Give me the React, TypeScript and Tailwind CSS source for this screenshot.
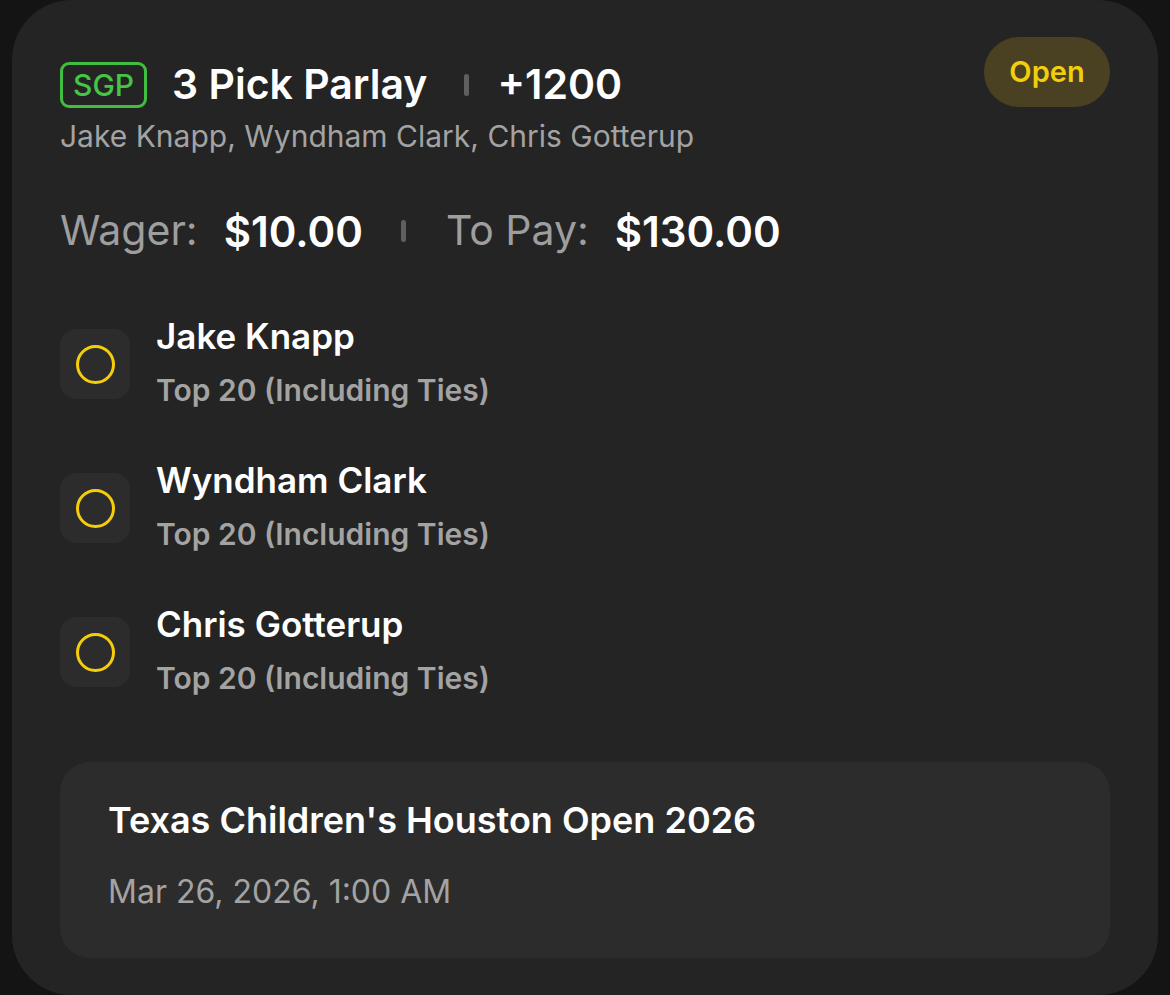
const legs = [
  { name: "Jake Knapp", market: "Top 20 (Including Ties)" },
  { name: "Wyndham Clark", market: "Top 20 (Including Ties)" },
  { name: "Chris Gotterup", market: "Top 20 (Including Ties)" },
];

function Divider() {
  return <span className="w-[5px] h-[22px] rounded-full bg-[#5f5f5f]" />;
}

export default function App() {
  return (
    <div
      className="w-[1170px] h-[995px] bg-[#141414] px-3 overflow-hidden"
      style={{ fontFamily: "Inter, 'Noto Sans', sans-serif" }}
    >
      <div className="h-[995px] bg-[#242424] rounded-[60px] px-12 pt-[37px]">
        <div className="flex justify-between items-start">
          <div className="pt-[25px]">
            <div className="flex items-center h-[46px]">
              <span className="h-[46px] px-[10px] flex items-center border-[3px] border-[#3fbe3f] rounded-[9px] text-[#45c445] text-[30px] font-medium">
                SGP
              </span>
              <span className="ml-[25px] text-white text-[41px] font-semibold">
                3 Pick Parlay
              </span>
              <span className="ml-[37px] mr-[28px] flex">
                <Divider />
              </span>
              <span className="text-white text-[41px] font-semibold">+1200</span>
            </div>
            <div className="mt-[8px] text-[#a3a3a3] text-[30px] leading-[40px]">
              Jake Knapp, Wyndham Clark, Chris Gotterup
            </div>
          </div>
          <span className="h-[70px] w-[126px] rounded-full bg-[#4a4122] text-[#f2cf0a] text-[29px] font-semibold flex items-center justify-center">
            Open
          </span>
        </div>

        <div className="mt-[50px] flex items-center h-[50px] text-[41px]">
          <span className="text-[#9e9e9e]">Wager:</span>
          <span className="ml-[26px] text-white font-semibold text-[42px]">$10.00</span>
          <span className="ml-[38px] mr-[40px] flex">
            <Divider />
          </span>
          <span className="text-[#9e9e9e]">To Pay:</span>
          <span className="ml-[26px] text-white font-semibold text-[42px]">$130.00</span>
        </div>

        <div className="mt-[73px] flex flex-col gap-[74px]">
          {legs.map((leg) => (
            <div key={leg.name} className="flex items-center h-[70px]">
              <div className="w-[70px] h-[70px] rounded-[16px] bg-[#2c2c2c] flex items-center justify-center">
                <span className="w-[39px] h-[39px] rounded-full border-[3px] border-[#f2cf0a]" />
              </div>
              <div className="ml-[26px] flex flex-col">
                <span className="text-white text-[35px] font-semibold leading-[52px] -mt-[2px]">
                  {leg.name}
                </span>
                <span className="text-[#a3a3a3] text-[30px] font-semibold leading-[52px] mt-[2px]">
                  {leg.market}
                </span>
              </div>
            </div>
          ))}
        </div>

        <div className="mt-[75px] h-[196px] rounded-[30px] bg-[#2c2c2c] px-12 pt-[36px]">
          <div className="text-white text-[36px] font-semibold leading-[44px]">
            Texas Children's Houston Open 2026
          </div>
          <div className="mt-[30px] text-[#a3a3a3] text-[32px] leading-[40px]">
            Mar 26, 2026, 1:00 AM
          </div>
        </div>
      </div>
    </div>
  );
}
